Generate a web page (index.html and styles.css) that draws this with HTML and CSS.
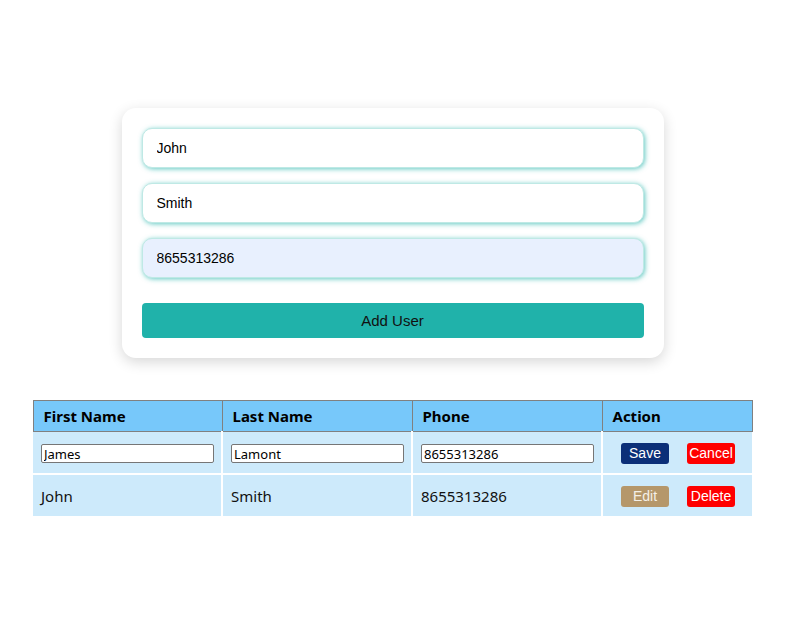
FILE: index.html
```html
<!DOCTYPE html>
<html>
<head>
<meta charset="utf-8">
<link rel="stylesheet" href="styles.css">
</head>
<body>
<div class="page">
  <form class="card">
    <input class="field" type="text" value="John">
    <input class="field" type="text" value="Smith">
    <input class="field field-filled" type="text" value="8655313286">
    <button class="add-btn" type="button">Add User</button>
  </form>

  <table class="users">
    <thead>
      <tr>
        <th class="c1">First Name</th>
        <th class="c2">Last Name</th>
        <th class="c3">Phone</th>
        <th class="c4">Action</th>
      </tr>
    </thead>
    <tbody>
      <tr class="edit-row">
        <td><input class="cell-input" type="text" value="James"></td>
        <td><input class="cell-input" type="text" value="Lamont"></td>
        <td><input class="cell-input" type="text" value="8655313286"></td>
        <td class="actions"><button class="btn btn-save" type="button">Save</button><button class="btn btn-red" type="button">Cancel</button></td>
      </tr>
      <tr>
        <td>John</td>
        <td>Smith</td>
        <td>8655313286</td>
        <td class="actions"><button class="btn btn-edit" type="button">Edit</button><button class="btn btn-red" type="button">Delete</button></td>
      </tr>
    </tbody>
  </table>
</div>
</body>
</html>
```

FILE: styles.css
```css
html, body {
  margin: 0;
  padding: 0;
  background: #ffffff;
}

.page {
  display: flex;
  flex-direction: column;
  align-items: center;
  padding-top: 108px;
}

.card {
  width: 502px;
  padding: 20px;
  background: #ffffff;
  border-radius: 14px;
  box-shadow: 0 4px 14px rgba(0, 0, 0, 0.16);
  display: flex;
  flex-direction: column;
  gap: 15px;
}

.field {
  box-sizing: border-box;
  width: 100%;
  height: 40px;
  padding: 0 14px;
  border: 1px solid #bfe9e5;
  border-radius: 10px;
  box-shadow: 1px 1px 5px rgba(32, 178, 170, 0.7);
  background: #ffffff;
  font-family: "Liberation Sans", Arial, sans-serif;
  font-size: 14px;
  color: #000000;
  outline: none;
}

.field-filled {
  background: #e8f0fe;
}

.add-btn {
  margin-top: 10px;
  height: 35px;
  width: 100%;
  border: none;
  border-radius: 4px;
  background: #20b2aa;
  font-family: "Liberation Sans", Arial, sans-serif;
  font-size: 15px;
  color: #111111;
}

.users {
  margin-top: 42px;
  width: 720px;
  border-collapse: collapse;
  table-layout: fixed;
  font-family: "Noto Sans", "Open Sans", sans-serif;
  font-size: 15px;
}

.users th {
  background: #77c8fa;
  border: 1px solid #808080;
  height: 30px;
  padding: 0 10px;
  text-align: left;
  font-weight: bold;
  color: #000;
}

.c1 { width: 168px; }
.c2, .c3 { width: 169px; }

.users td {
  background: #cdeafb;
  border: 2px solid #ffffff;
  padding: 0 8px;
  height: 41px;
  color: #111;
}

.users tbody tr td:first-child { border-left: none; }
.users tbody tr td:last-child { border-right: none; }
.users tbody tr:first-child td { border-top: none; }
.users tbody tr:last-child td { border-bottom: none; }

.cell-input {
  box-sizing: border-box;
  width: 173px;
  height: 19px;
  border: 1px solid #767676;
  border-radius: 2px;
  padding: 0 2px;
  font-family: "Noto Sans", "Open Sans", sans-serif;
  font-size: 13px;
  color: #000;
  background: #fff;
  vertical-align: middle;
}

.users td.actions {
  padding-left: 18px;
  white-space: nowrap;
}

.btn {
  width: 48px;
  height: 21px;
  border: none;
  border-radius: 3px;
  color: #ffffff;
  font-family: "Liberation Sans", Arial, sans-serif;
  font-size: 14px;
  padding: 0;
  margin-right: 18px;
  vertical-align: middle;
}

.btn-save { background: #0b2f78; }
.btn-red { background: #ff0000; margin-right: 0; }
.btn-edit { background: #b5976a; color: #f4f0e8; }
```
